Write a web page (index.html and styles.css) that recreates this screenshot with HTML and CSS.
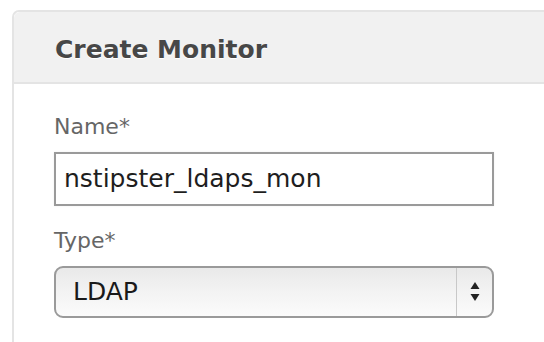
FILE: index.html
```html
<!DOCTYPE html>
<html lang="en">

<head>
    <meta charset="utf-8">
    <meta name="viewport" content="width=device-width, initial-scale=1.0">
    <title>Create Monitor</title>
    <link rel="stylesheet" href="styles.css">
</head>

<body>
    <section class="panel">
        <div class="panel_head">
            <h2>Create Monitor</h2>
        </div>
        <div class="panel_body">
            <label class="felt_label" for="navn">Name*</label>
            <div class="felt_input" id="navn">nstipster_ldaps_mon</div>

            <label class="felt_label" for="type">Type*</label>
            <div class="felt_select" id="type">
                <span class="valgt_tekst">LDAP</span>
                <span class="pile">
                    <svg width="10" height="22" viewBox="0 0 10 22">
                        <path d="M5 1 L9.5 8 L0.5 8 Z" fill="#222" />
                        <path d="M0.5 13 L9.5 13 L5 20 Z" fill="#222" />
                    </svg>
                </span>
            </div>
        </div>
    </section>
</body></html>
```

FILE: styles.css
```css
body {
    margin: 0;
    background-color: white;
    font-family: "DejaVu Sans", Verdana, sans-serif;
    overflow: hidden;
    height: 342px;
}

.panel {
    margin: 10px 0 0 12px;
    border-top: 2px solid #e4e4e4;
    border-left: 2px solid #e4e4e4;
    border-radius: 7px 0 0 0;
    height: 330px;
}

.panel_head {
    background-color: #f1f1f1;
    border-bottom: 2px solid #e4e4e4;
    border-radius: 6px 0 0 0;
    height: 70px;
    display: flex;
    align-items: center;
}

.panel_head h2 {
    margin: 5px 0 0 41px;
    font-size: 25px;
    font-weight: bold;
    color: #474747;
    text-shadow: 0 1px 0 white;
}

.panel_body {
    padding: 30px 0 0 40px;
}

.felt_label {
    display: block;
    font-size: 22px;
    line-height: 26px;
    color: #666;
    margin: 0 0 12px 0;
}

.felt_input {
    box-sizing: border-box;
    width: 440px;
    height: 54px;
    border: 2px solid #9a9a9a;
    box-shadow: 0 0 2px #eee;
    font-size: 25px;
    color: #1e1e1e;
    padding: 0 0 2px 8px;
    display: flex;
    align-items: center;
    margin: 0 0 22px 0;
}

.felt_select {
    box-sizing: border-box;
    width: 440px;
    height: 52px;
    border: 2px solid #9a9a9a;
    border-radius: 9px;
    background: linear-gradient(#e9e9e9, #f3f3f3 50%, #fbfbfb);
    display: flex;
    align-items: center;
    font-size: 25px;
    color: #1a1a1a;
}

.valgt_tekst {
    flex: 1;
    padding: 0 0 2px 17px;
}

.pile {
    width: 35px;
    height: 100%;
    border-left: 1px solid #c8c8c8;
    display: flex;
    align-items: center;
    justify-content: center;
}
```
